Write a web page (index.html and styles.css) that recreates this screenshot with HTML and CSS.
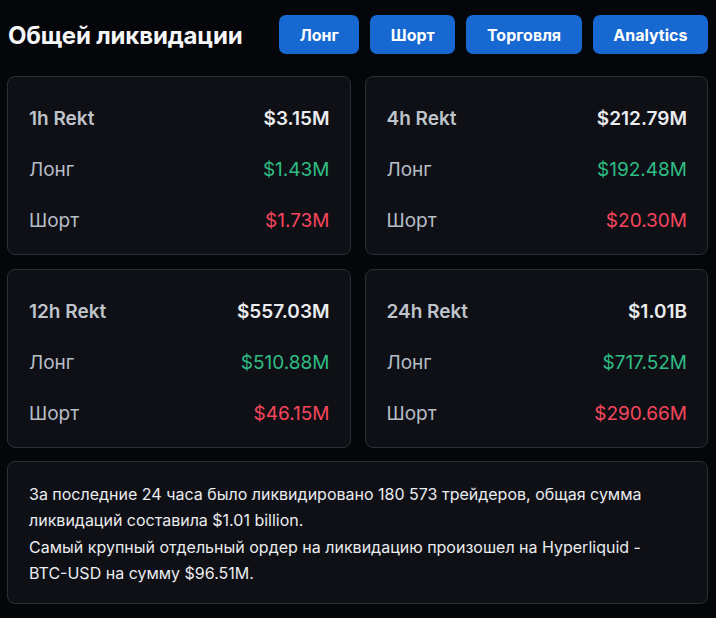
FILE: index.html
```html
<!DOCTYPE html>
<html lang="ru">
<head>
<meta charset="utf-8">
<link rel="stylesheet" href="styles.css">
</head>
<body>
<div class="page">
  <header class="header">
    <h1 class="title">Общей ликвидации</h1>
    <nav class="tabs">
      <button class="btn">Лонг</button>
      <button class="btn">Шорт</button>
      <button class="btn">Торговля</button>
      <button class="btn">Analytics</button>
    </nav>
  </header>
  <section class="grid">
    <div class="card">
      <div class="row"><span class="head">1h Rekt</span><span class="total">$3.15M</span></div>
      <div class="row"><span class="label">Лонг</span><span class="long">$1.43M</span></div>
      <div class="row"><span class="label">Шорт</span><span class="short">$1.73M</span></div>
    </div>
    <div class="card">
      <div class="row"><span class="head">4h Rekt</span><span class="total">$212.79M</span></div>
      <div class="row"><span class="label">Лонг</span><span class="long">$192.48M</span></div>
      <div class="row"><span class="label">Шорт</span><span class="short">$20.30M</span></div>
    </div>
    <div class="card">
      <div class="row"><span class="head">12h Rekt</span><span class="total">$557.03M</span></div>
      <div class="row"><span class="label">Лонг</span><span class="long">$510.88M</span></div>
      <div class="row"><span class="label">Шорт</span><span class="short">$46.15M</span></div>
    </div>
    <div class="card">
      <div class="row"><span class="head">24h Rekt</span><span class="total">$1.01B</span></div>
      <div class="row"><span class="label">Лонг</span><span class="long">$717.52M</span></div>
      <div class="row"><span class="label">Шорт</span><span class="short">$290.66M</span></div>
    </div>
  </section>
  <div class="note">
    За последние 24 часа было ликвидировано 180 573 трейдеров, общая сумма ликвидаций составила $1.01 billion.<br>
    Самый крупный отдельный ордер на ликвидацию произошел на Hyperliquid - <span class="nowrap">BTC-USD</span> на сумму $96.51M.
  </div>
</div>
</body>
</html>
```

FILE: styles.css
```css
* { box-sizing: border-box; }
html, body {
  margin: 0;
  background: #05060a;
}
body {
  font-family: Inter, "Noto Sans", "DejaVu Sans", sans-serif;
  color: #eaecef;
}
.page {
  padding: 15px 8px 0 7px;
}
.header {
  display: flex;
  align-items: center;
  justify-content: space-between;
  height: 39px;
}
.title {
  margin: 2px 0 0 1px;
  font-size: 24px;
  font-weight: 700;
  color: #f5f6f8;
  letter-spacing: -0.15px;
}
.tabs {
  display: flex;
  gap: 11px;
}
.btn {
  height: 39px;
  border: 0;
  border-radius: 7px;
  background: #1769d1;
  color: #ffffff;
  font-family: Inter, "Noto Sans", sans-serif;
  font-size: 16px;
  font-weight: 700;
  padding: 0 20.6px;
}
.grid {
  margin-top: 22px;
  display: grid;
  grid-template-columns: 1fr 1fr;
  gap: 14px;
}
.card {
  background: #0f1016;
  border: 1px solid #2c2f37;
  border-radius: 8px;
  padding: 25px 20px 18px 21px;
  display: flex;
  flex-direction: column;
  gap: 19px;
}
.row {
  display: flex;
  justify-content: space-between;
  align-items: center;
  height: 32px;
  font-size: 19px;
}
.head {
  font-weight: 600;
  color: #bfc3ca;
}
.label {
  font-weight: 400;
  color: #b7bdc6;
}
.total {
  font-weight: 600;
  color: #eaecef;
}
.long {
  color: #2ebd85;
}
.short {
  color: #f6465d;
}
.nowrap {
  white-space: nowrap;
}
.note {
  margin-top: 13px;
  background: #0f1016;
  border: 1px solid #2c2f37;
  border-radius: 8px;
  padding: 19px 21px 17px 21px;
  font-size: 16px;
  line-height: 26.3px;
  color: #eaecef;
}
```
